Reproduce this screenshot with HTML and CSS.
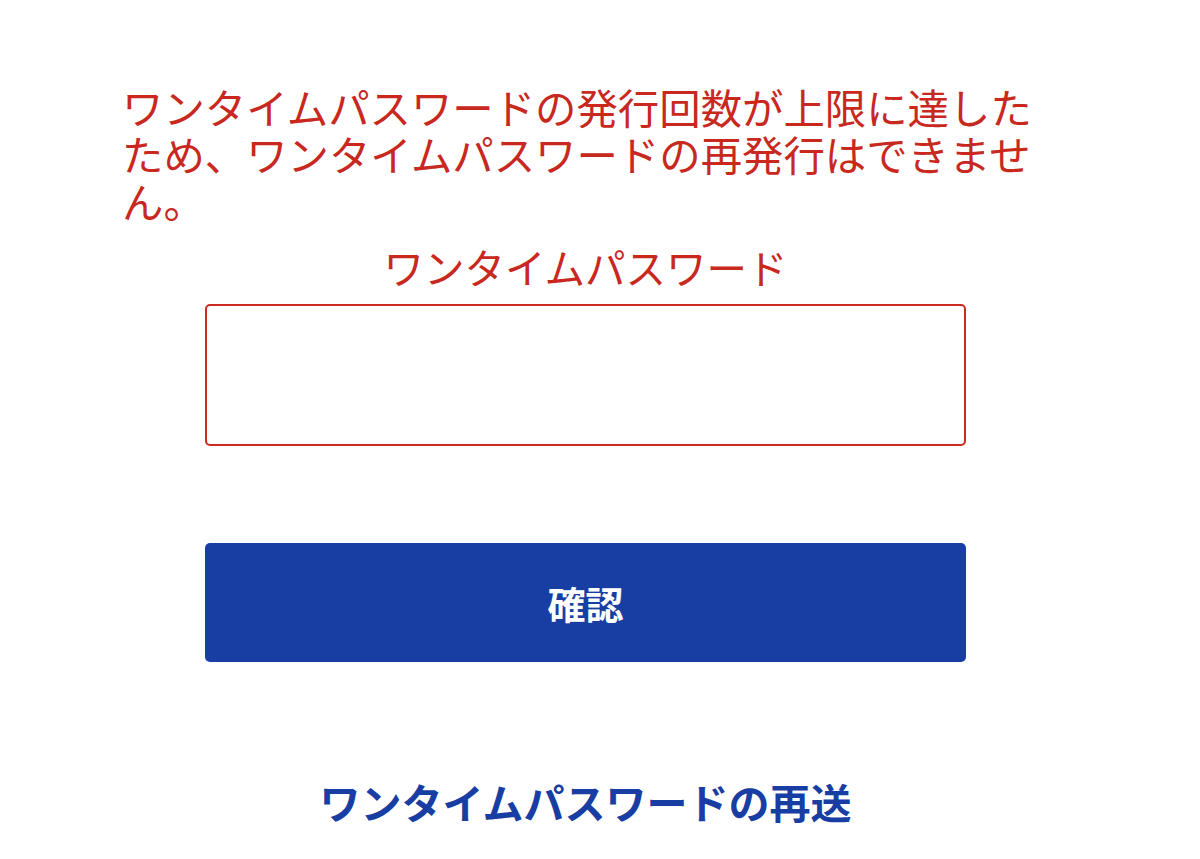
FILE: index.html
```html
<!DOCTYPE html>
<html lang="ja">
<head>
<meta charset="utf-8">
<link rel="stylesheet" href="styles.css">
</head>
<body>
<main class="page">
  <p class="error">ワンタイムパスワードの発行回数が上限に達したため、ワンタイムパスワードの再発行はできません。</p>
  <form class="form">
    <label class="label" for="otp">ワンタイムパスワード</label>
    <input class="input" id="otp" type="text">
    <button class="button" type="button">確認</button>
  </form>
  <a class="resend" href="#">ワンタイムパスワードの再送</a>
</main>
</body>
</html>
```
FILE: styles.css
```css
html, body {
  margin: 0;
  padding: 0;
  background: #ffffff;
}
body {
  font-family: "Noto Sans CJK JP", "Noto Sans", sans-serif;
}
.page {
  width: 927px;
  margin-left: 122px;
  padding-top: 83px;
  display: flex;
  flex-direction: column;
  align-items: center;
}
.error {
  margin: 0;
  align-self: stretch;
  color: #c8281e;
  font-size: 41.4px;
  line-height: 47px;
}
.form {
  display: flex;
  flex-direction: column;
  align-items: center;
  width: 761px;
  margin-top: 17px;
}
.label {
  color: #c8281e;
  font-size: 40.5px;
  line-height: 52px;
  margin-bottom: 11px;
}
.input {
  box-sizing: border-box;
  width: 761px;
  height: 142px;
  border: 2.5px solid #cc2a1f;
  border-radius: 5px;
  background: #fff;
  outline: none;
}
.button {
  margin-top: 97px;
  width: 761px;
  height: 119px;
  border: none;
  border-radius: 5px;
  background: #183ea3;
  color: #ffffff;
  font-family: "Noto Sans CJK JP", sans-serif;
  font-weight: 700;
  font-size: 38px;
}
.resend {
  margin-top: 113px;
  color: #183ea3;
  font-weight: 700;
  font-size: 41px;
  line-height: 52px;
  text-decoration: none;
}
```
